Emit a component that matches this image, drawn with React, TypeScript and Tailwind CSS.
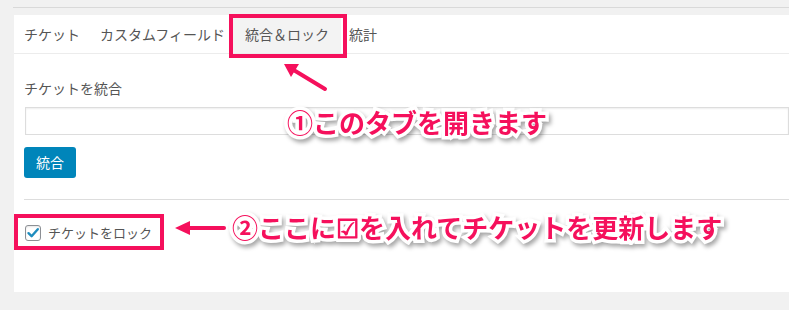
import React from "react";

const jp = { fontFamily: '"Noto Sans CJK JP", "Noto Sans", sans-serif' };

function Annotation({ text, className }: { text: string; className: string }) {
  return (
    <div
      className={`absolute whitespace-nowrap text-[26px] leading-[30px] font-bold text-[#f5105c] [paint-order:stroke_fill] [-webkit-text-stroke:7px_#ffffff] drop-shadow-[2px_3px_2px_rgba(0,0,0,0.35)] ${className}`}
      style={jp}
    >
      {text}
    </div>
  );
}

export default function App() {
  return (
    <div className="relative w-[789px] h-[310px] overflow-hidden bg-[#f1f1f1]" style={jp}>
      <div className="pt-[7px] pl-[13px]">
        <div className="h-px bg-[#d9d9d9]" />
      </div>
      <div className="ml-[14px] mt-[7px] h-[277px] bg-white text-[14px] text-[#555]">
        {/* tabs */}
        <div className="flex h-[39px] items-stretch border-b border-[#ececec] pt-[3px]">
          <div className="ml-[10px] flex items-center pb-[3px]">チケット</div>
          <div className="ml-[20px] flex items-center pb-[3px]">カスタムフィールド</div>
          <div className="ml-[8px] flex items-center bg-[#f3f3f3] px-[12px] pb-[3px]">統合＆ロック</div>
          <div className="ml-[8px] flex items-center pb-[3px]">統計</div>
        </div>
        {/* content */}
        <div className="pl-[10px]">
          <div className="mt-[24px] h-[20px] leading-[20px]">チケットを統合</div>
          <div className="ml-px mt-[9px] h-[28px] border border-[#dddddd] bg-white shadow-[inset_0_1px_2px_rgba(0,0,0,0.07)]" />
          <div className="mt-[12px] flex h-[31px] w-[52px] items-center justify-center rounded-[3px] bg-[#0085ba] text-white">
            統合
          </div>
          <div className="mt-[21px] h-px bg-[#dddddd]" />
          <div className="mt-[25px] flex items-center">
            <div className="ml-px flex h-[16px] w-[16px] items-center justify-center rounded-[3px] border border-[#8c8f94] bg-white shadow-[inset_0_1px_2px_rgba(0,0,0,0.1)]">
              <svg width="14" height="14" viewBox="0 0 14 14">
                <path d="M2.5 7.2 L5.6 10.2 L11.8 3.2" fill="none" stroke="#1e8cbe" strokeWidth="2.4" strokeLinecap="round" strokeLinejoin="round" />
              </svg>
            </div>
            <div className="ml-[7px] text-[13px] leading-[16px]">チケットをロック</div>
          </div>
        </div>
      </div>

      {/* highlight boxes */}
      <div className="absolute left-[229px] top-[14px] h-[44px] w-[118px] border-4 border-[#f5105c]" />
      <div className="absolute left-[14px] top-[214px] h-[36px] w-[150px] border-4 border-[#f5105c]" />

      {/* arrows */}
      <svg className="absolute left-0 top-0" width="789" height="310" viewBox="0 0 789 310">
        <line x1="325" y1="89" x2="292" y2="69" stroke="#f5105c" strokeWidth="4" strokeLinecap="round" />
        <polygon points="284,64 299,64 291,77" fill="#f5105c" />
        <line x1="224" y1="228" x2="184" y2="228" stroke="#f5105c" strokeWidth="4" strokeLinecap="round" />
        <polygon points="175,228 190,221 190,235" fill="#f5105c" />
      </svg>

      <Annotation text="①このタブを開きます" className="left-[287px] top-[107px]" />
      <Annotation text="②ここに☑を入れてチケットを更新します" className="left-[232px] top-[212px]" />
    </div>
  );
}
